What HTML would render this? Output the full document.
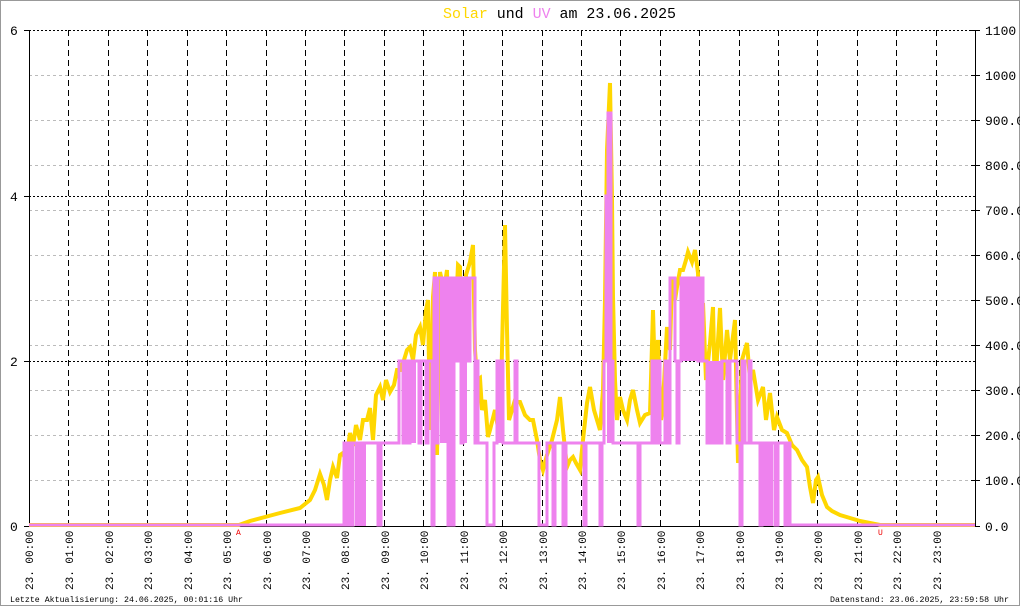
<!DOCTYPE html>
<html><head><meta charset="utf-8"><style>
html,body{margin:0;padding:0;background:#fff}
svg{display:block}
text{font-family:"Liberation Mono","DejaVu Sans Mono",monospace}
</style></head><body>
<svg width="1020" height="606" viewBox="0 0 1020 606" xmlns="http://www.w3.org/2000/svg">
<rect x="0.5" y="0.5" width="1019" height="605" fill="#fff" stroke="#999"/>
<text x="443" y="18" font-size="15" textLength="233" lengthAdjust="spacingAndGlyphs"><tspan fill="#ffd700">Solar</tspan> und <tspan fill="#ee82ee">UV</tspan> am 23.06.2025</text>
<g stroke="#bbb" stroke-dasharray="3,3" stroke-width="1">
<path d="M29 480.5H975M29 435.5H975M29 390.5H975M29 345.5H975M29 300.5H975M29 255.5H975M29 210.5H975M29 165.5H975M29 120.5H975M29 75.5H975"/>
</g>
<g stroke="#000" stroke-dasharray="2,2" stroke-width="1">
<path d="M29 30.5H975M29 196.5H975M29 361.5H975"/>
</g>
<g stroke="#000" stroke-dasharray="6,4" stroke-width="1">
<path d="M68.5 30V526M108.5 30V526M147.5 30V526M187.5 30V526M226.5 30V526M266.5 30V526M305.5 30V526M344.5 30V526M384.5 30V526M423.5 30V526M463.5 30V526M502.5 30V526M542.5 30V526M581.5 30V526M620.5 30V526M660.5 30V526M699.5 30V526M739.5 30V526M778.5 30V526M817.5 30V526M857.5 30V526M896.5 30V526M936.5 30V526"/>
</g>
<g stroke="#000" stroke-width="1">
<path d="M29.5 30V527M975.5 30V527M29 526.5H975"/>
<path d="M24 30.5H29M24 196.5H29M24 361.5H29M24 526.5H29"/>
<path d="M971 30.5H980M971 75.5H980M971 120.5H980M971 165.5H980M971 210.5H980M971 255.5H980M971 300.5H980M971 345.5H980M971 390.5H980M971 435.5H980M971 480.5H980M971 526.5H980"/>
</g>
<g font-size="13" fill="#000">
<text x="10" y="35">6</text><text x="10" y="201">4</text><text x="10" y="366">2</text><text x="10" y="531">0</text>
</g>
<g font-size="13" fill="#000">
<text x="985" y="35">1100</text><text x="985" y="80">1000</text><text x="985" y="125">900.0</text><text x="985" y="170">800.0</text><text x="985" y="215">700.0</text><text x="985" y="260">600.0</text><text x="985" y="305">500.0</text><text x="985" y="350">400.0</text><text x="985" y="395">300.0</text><text x="985" y="440">200.0</text><text x="985" y="485">100.0</text><text x="985" y="531">0.0</text>
</g>
<polyline fill="none" stroke="#ffd700" stroke-width="4" points="29,525 239,525 250,521 265,517 280,513 300,508 310,500 315,490 320,474 324,485 327,500 330,480 333,467 337,478 340,455 343,453 346,462 350,433 353,446 356,425 360,440 363,420 367,420 370,408 373,440 376,395 380,387 383,400 386,380 390,392 394,385 397,370 400,370 404,360 407,350 410,347 413,360 416,335 420,327 423,345 426,310 428,300 430,430 433,297 435,272 437,455 440,272 444,290 447,270 450,460 452,290 455,330 458,265 460,267 463,420 466,275 470,262 473,245 475,350 477,380 480,378 482,410 485,400 488,437 490,430 495,410 500,440 502,350 505,225 507,330 509,420 512,410 515,400 518,402 520,402 525,415 530,420 533,420 537,440 540,460 543,470 547,455 552,440 557,420 560,397 563,430 567,467 570,460 573,457 576,463 580,470 583,440 587,403 590,387 594,410 597,420 600,430 603,390 605,300 607,150 610,83 612,200 613,297 615,380 617,420 620,397 623,410 627,420 630,400 633,390 637,410 640,423 645,415 650,413 653,310 655,380 658,340 661,420 663,403 667,327 670,350 672,277 675,300 677,287 680,270 683,270 686,260 688,252 692,262 695,250 698,273 700,330 703,303 706,380 710,343 713,307 715,400 717,357 720,308 723,380 727,330 730,360 735,320 738,463 742,360 747,343 750,380 753,370 758,400 763,387 766,420 770,393 774,430 777,417 782,430 787,433 792,445 797,450 802,460 807,467 810,487 813,503 816,480 818,477 822,495 827,507 832,511 840,515 850,518 860,521 870,523 880,525 975,525"/>
<g fill="#ee82ee">
<rect x="355" y="443" width="11" height="83"/>
<rect x="411" y="361" width="5" height="82"/>
<rect x="440" y="278" width="7" height="165"/>
<rect x="463" y="278" width="4" height="165"/>
<rect x="497" y="361" width="6" height="82"/>
<rect x="607" y="113" width="5" height="330"/>
<rect x="681" y="278" width="17" height="83"/>
<rect x="707" y="361" width="15" height="82"/>
<rect x="763" y="443" width="10" height="83"/>
</g>
<path fill="none" stroke="#ee82ee" stroke-width="3" d="M29 525H344V443H347V525H349V443H352V525H353V443H378V525H381V443H399V361H403V443H405V361H408V443H410V361H416V361H419V443H421V361H426V443H428V361H432V525H434V278H436V443H438V278H448V525H450V278H452V525H454V278H456V361H458V278H461V443H463V278H468V361H470V278H475V443H476V361H478V443H487V525H494V443H497V361H503V443H515V361H517V443H539V525H547V443H553V525H555V443H563V525H566V443H584V525H586V443H600V525H602V443H604V361H606V196H608V113H611V361H613V443H638V525H640V443H652V361H654V443H657V361H660V443H665V361H668V443H670V278H675V361H677V443H679V361H681V278H698V361H700V278H703V361H707V443H722V361H727V443H730V361H737V443H740V525H742V361H745V443H749V361H751V443H760V525H762V443H775V525H778V443H785V525H788V443H790V525H975"/>
<text x="236" y="535" font-size="8" fill="#e00">A</text>
<text x="878" y="535" font-size="8" fill="#e00">U</text>
<g font-size="11" fill="#000">
<text transform="translate(33,590) rotate(-90)">23. 00:00</text>
<text transform="translate(73,590) rotate(-90)">23. 01:00</text>
<text transform="translate(113,590) rotate(-90)">23. 02:00</text>
<text transform="translate(152,590) rotate(-90)">23. 03:00</text>
<text transform="translate(192,590) rotate(-90)">23. 04:00</text>
<text transform="translate(231,590) rotate(-90)">23. 05:00</text>
<text transform="translate(271,590) rotate(-90)">23. 06:00</text>
<text transform="translate(310,590) rotate(-90)">23. 07:00</text>
<text transform="translate(349,590) rotate(-90)">23. 08:00</text>
<text transform="translate(389,590) rotate(-90)">23. 09:00</text>
<text transform="translate(428,590) rotate(-90)">23. 10:00</text>
<text transform="translate(468,590) rotate(-90)">23. 11:00</text>
<text transform="translate(507,590) rotate(-90)">23. 12:00</text>
<text transform="translate(547,590) rotate(-90)">23. 13:00</text>
<text transform="translate(586,590) rotate(-90)">23. 14:00</text>
<text transform="translate(625,590) rotate(-90)">23. 15:00</text>
<text transform="translate(665,590) rotate(-90)">23. 16:00</text>
<text transform="translate(704,590) rotate(-90)">23. 17:00</text>
<text transform="translate(744,590) rotate(-90)">23. 18:00</text>
<text transform="translate(783,590) rotate(-90)">23. 19:00</text>
<text transform="translate(822,590) rotate(-90)">23. 20:00</text>
<text transform="translate(862,590) rotate(-90)">23. 21:00</text>
<text transform="translate(901,590) rotate(-90)">23. 22:00</text>
<text transform="translate(941,590) rotate(-90)">23. 23:00</text>
</g>
<text x="10" y="602" font-size="8.5" textLength="233" lengthAdjust="spacingAndGlyphs">Letzte Aktualisierung: 24.06.2025, 00:01:16 Uhr</text>
<text x="830" y="602" font-size="8.5" textLength="179" lengthAdjust="spacingAndGlyphs">Datenstand: 23.06.2025, 23:59:58 Uhr</text>
</svg>
</body></html>
